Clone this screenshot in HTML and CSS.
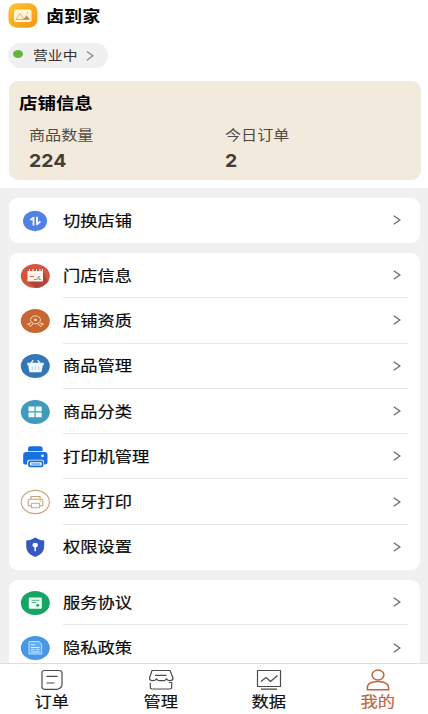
FILE: index.html
```html
<!DOCTYPE html>
<html lang="zh-CN">
<head>
<meta charset="utf-8">
<title>卤到家</title>
<link rel="stylesheet" href="styles.css">
</head>
<body>
<div class="app">
  <header class="header">
    <div class="brand">
      <svg class="logo" viewBox="0 0 30 25">
        <defs><linearGradient id="gold" x1="0" y1="0" x2="1" y2="1"><stop offset="0" stop-color="#fcc72c"/><stop offset="1" stop-color="#f29418"/></linearGradient></defs>
        <rect x=".5" y=".3" width="29" height="24.4" rx="8.5" ry="8" fill="url(#gold)"/>
        <rect x="6" y="6.5" width="17.5" height="12.5" rx="2" fill="#fff4d6"/>
        <path d="M8 16.5l4-6 4 6z" fill="none" stroke="#dfa95c" stroke-width=".9"/>
        <path d="M15 16.8l3.5-4.5 3.5 4.5z" fill="#c88b4c"/><circle cx="19.5" cy="9.7" r=".8" fill="#f5b32b"/>
      </svg>
      <h1 class="name"><span class="wide">卤到家</span></h1>
    </div>
    <div class="status">
      <i class="dot"></i><span class="status-text wide">营业中</span>
      <svg class="status-chevron" viewBox="0 0 8 12"><path d="M1 1.5l5.8 4.3L1 10.2"/></svg>
    </div>
    <section class="summary">
      <h2 class="summary-title"><span class="wide">店铺信息</span></h2>
      <dl class="stats">
        <div class="stat"><dt><span class="wide">商品数量</span></dt><dd><span class="wide">224</span></dd></div>
        <div class="stat"><dt><span class="wide">今日订单</span></dt><dd><span class="wide">2</span></dd></div>
      </dl>
    </section>
  </header>

  <main class="menu">
    <section class="card single">
      <div class="row">
        <svg class="icon" viewBox="0 0 30 26"><ellipse cx="15" cy="13" rx="12" ry="10.2" fill="#4f82e4"/><path d="M10.3 12l3.2-2.4v8M17 8.700v7.600l3.400-3" fill="none" stroke="#fff" stroke-width="1.8" stroke-linejoin="round"/></svg>
        <div class="line"><span class="label">切换店铺</span><svg class="chevron" viewBox="0 0 8 10"><path d="M.8.8l6 4.200-6 4.200"/></svg></div>
      </div>
    </section>

    <section class="card">
      <div class="row">
        <svg class="icon" viewBox="0 0 30 26"><ellipse cx="15.3" cy="13" rx="14.5" ry="12" fill="#d35440"/><path d="M23 8l4.500 10c-2 4-6 6.500-11.500 7l-8-6z" fill="#b0443b"/><path d="M7.500 8h15.500v10.500h-15.500z" fill="#fff1e8"/><path d="M9.500 6v4M13 6v4M16.500 6v4M20 6v4M22.500 6v4" stroke="#fff"/><path d="M10 13.500h4" stroke="#cf6657"/><path d="M14 16.500h3l2-3.500v3.500h2" fill="none" stroke="#5ea39a" stroke-width=".9"/></svg>
        <div class="line"><span class="label">门店信息</span><svg class="chevron" viewBox="0 0 8 10"><path d="M.8.8l6 4.200-6 4.200"/></svg></div>
      </div>
      <div class="row">
        <svg class="icon" viewBox="0 0 30 26"><ellipse cx="15.3" cy="13" rx="14.5" ry="12" fill="#c76631"/><g fill="none" stroke="#ffd5b2"><ellipse cx="15.5" cy="11.8" rx="5" ry="4"/><path d="M11.5 14.8l-4 1.3 2 .8.7 1.8 3.2-3M19.5 14.8l4 1.3-2 .8-.7 1.8-3.2-3"/></g><ellipse cx="15.5" cy="11.8" rx="1.5" ry="1.2" fill="#ffe2c7"/></svg>
        <div class="line"><span class="label">店铺资质</span><svg class="chevron" viewBox="0 0 8 10"><path d="M.8.8l6 4.200-6 4.200"/></svg></div>
      </div>
      <div class="row">
        <svg class="icon" viewBox="0 0 30 26"><ellipse cx="15.3" cy="13" rx="14.5" ry="12" fill="#3176b5"/><path d="M10.500 11l2.800-3.800M20.500 11l-2.800-3.800" stroke="#e8f4ff" stroke-width="1.4"/><path d="M7.200 9.700h16.600v2.600h-1l-1.300 6.900h-12l-1.300-6.900h-1z" fill="#eff8ff"/><path d="M12.300 13v4M15.500 13v4M18.700 13v4" stroke="#b9d6eb" stroke-width=".9"/></svg>
        <div class="line"><span class="label">商品管理</span><svg class="chevron" viewBox="0 0 8 10"><path d="M.8.8l6 4.200-6 4.200"/></svg></div>
      </div>
      <div class="row">
        <svg class="icon" viewBox="0 0 30 26"><ellipse cx="15.3" cy="13" rx="14.5" ry="12" fill="#3e9bbd"/><path d="M8.5 7.5h6v4.8h-6zM15.700 7.500h6v4.800h-6zM8.500 13.500h6v4.800h-6zM15.700 13.500h6v4.800h-6z" fill="#f1fbff"/></svg>
        <div class="line"><span class="label">商品分类</span><svg class="chevron" viewBox="0 0 8 10"><path d="M.8.8l6 4.200-6 4.200"/></svg></div>
      </div>
      <div class="row">
        <svg class="icon" viewBox="0 0 30 26"><path d="M8 7.200V4.400q0-2.200 2.500-2.200h9.600q2.500 0 2.500 2.200v2.800z" fill="#1770e0"/><path d="M6.500 8h18q3 0 3 2.800v7.600q0 2.100-2.500 2.100h-.9v-2.700q0-2-2.400-2H9.500q-2.400 0-2.400 2v2.700H6q-2.800 0-2.800-2.100v-7.600q0-2.800 3.300-2.800z" fill="#1770e0"/><rect x="9" y="17.400" width="13.600" height="5" rx="1.300" fill="#fff" stroke="#1770e0" stroke-width="1.800"/><path d="M11.500 20h8.800" stroke="#1770e0"/><circle cx="22.500" cy="11.800" r="1.400" fill="#fff"/></svg>
        <div class="line"><span class="label">打印机管理</span><svg class="chevron" viewBox="0 0 8 10"><path d="M.8.8l6 4.200-6 4.200"/></svg></div>
      </div>
      <div class="row">
        <svg class="icon" viewBox="0 0 30 26"><g fill="none" stroke="#c8a37c" stroke-width="1.1"><ellipse cx="15.3" cy="13" rx="14.1" ry="11.6"/><path d="M11 10V7.500h9V10M11 16.800H8.200v-5q0-1.600 2-1.600h10.600q2 0 2 1.600v5H20"/><rect x="11.300" y="14.300" width="8.400" height="4.400" rx="1"/><path d="M19.500 12.200h1.500"/></g></svg>
        <div class="line"><span class="label">蓝牙打印</span><svg class="chevron" viewBox="0 0 8 10"><path d="M.8.8l6 4.200-6 4.200"/></svg></div>
      </div>
      <div class="row">
        <svg class="icon" viewBox="0 0 30 26"><path d="M15.200 3.500q4 2.800 9 3v6q0 7-9 10.500-9-3.500-9-10.500v-6q5-.2 9-3z" fill="#3558c2"/><ellipse cx="15.200" cy="11" rx="2.700" ry="2.300" fill="#fff"/><path d="M15.200 12v5.200" stroke="#fff" stroke-width="1.500"/></svg>
        <div class="line"><span class="label">权限设置</span><svg class="chevron" viewBox="0 0 8 10"><path d="M.8.8l6 4.200-6 4.200"/></svg></div>
      </div>
    </section>

    <section class="card">
      <div class="row">
        <svg class="icon" viewBox="0 0 30 26"><ellipse cx="15.300" cy="13" rx="14.500" ry="12" fill="#15a565"/><rect x="8.800" y="7.500" width="13" height="11.300" rx="1" fill="#effff6"/><path d="M11.500 10.300h8M11.500 12.500h4.500" stroke="#48b985"/><circle cx="17.700" cy="15.200" r="1.500" fill="#28a66c"/></svg>
        <div class="line"><span class="label">服务协议</span><svg class="chevron" viewBox="0 0 8 10"><path d="M.8.8l6 4.200-6 4.200"/></svg></div>
      </div>
      <div class="row">
        <svg class="icon" viewBox="0 0 30 26"><ellipse cx="15.300" cy="13" rx="14.500" ry="12" fill="#4896e6"/><path d="M9 6.500h10l2.700 2.500v10H9z" fill="#66aef0" stroke="#b9dfff"/><path d="M11 9.700h4M11 12.500h8.500M11 14.700h3.500M16 14.700h3.500M11 17h8.500" stroke="#d3eaff"/></svg>
        <div class="line"><span class="label">隐私政策</span><svg class="chevron" viewBox="0 0 8 10"><path d="M.8.8l6 4.200-6 4.200"/></svg></div>
      </div>
    </section>
  </main>

  <nav class="tabs">
    <a class="tab"><svg viewBox="0 0 28 24"><path d="M6.500 2.500h14.500q3 0 3 2.500v11.500q0 2-1.500 3.300t-3.500 1.500H6.500q-2.500 0-2.500-2.500V4.800q0-2.300 2.500-2.300zM8.500 8.300h11M8.500 15h8"/></svg><span>订单</span></a>
    <a class="tab"><svg viewBox="0 0 28 24"><path d="M5 2.500h18l3 7.500q0 2.700-3 2.700-2.500 0-3.500-2-1 2-3 2h-4q-2 0-3-2-1 2-3.500 2-3.500 0-3.500-2.700zM8 7.300h11.500M3.300 15v4.300q0 1.700 1.800 1.700h17.800q1.800 0 1.800-1.700v-4.800h-3"/></svg><span>管理</span></a>
    <a class="tab"><svg viewBox="0 0 28 24"><path d="M2.500 2.500h23v16h-23zM6 13.500l5-4 4.500 4 7-6M6 21.200h16"/></svg><span>数据</span></a>
    <a class="tab active"><svg viewBox="0 0 28 24"><ellipse cx="14" cy="7" rx="5.900" ry="5"/><path d="M3.300 21.800v-1.500q0-6.800 10.700-6.800t10.700 6.800v1.500z"/></svg><span>我的</span></a>
  </nav>
</div>
</body>
</html>
```
FILE: styles.css
```css
* { box-sizing: border-box; }
body {
  margin: 0;
  background: #fff;
  color: #111;
  font-family: "Noto Sans CJK SC", sans-serif;
}
h1, h2, dl, dd { margin: 0; }
svg { display: block; flex: none; }

.app {
  display: flex;
  flex-direction: column;
  height: 714px;
  overflow: hidden;
}
.wide {
  display: inline-block;
  transform-origin: left center;
  white-space: nowrap;
}

.header {
  flex: none;
  height: 188px;
  padding: 3px 7px 0 8px;
}
.brand {
  display: flex;
  align-items: center;
  gap: 8px;
  height: 25px;
}
.logo { width: 30px; height: 25px; }
.name {
  margin-bottom: 2px;
  font-size: 16px;
  line-height: 24px;
  font-weight: 700;
  color: #000;
}
.name .wide { transform: scaleX(1.13); }

.status {
  display: flex;
  align-items: center;
  width: 100px;
  height: 25px;
  margin-top: 15px;
  padding-left: 5px;
  border-radius: 13px;
  background: #f0f0f1;
}
.dot {
  width: 10px;
  height: 8px;
  margin-bottom: 3px;
  border-radius: 50%;
  background: #65b63e;
}
.status-text {
  width: 52px;
  margin: 0 0 2px 10px;
  font-size: 13px;
  line-height: 20px;
  color: #333;
  transform: scaleX(1.14);
}
.status-chevron { width: 8px; height: 12px; margin-left: 1px; }
.status-chevron path { fill: none; stroke: #888; stroke-width: 1.3; }

.summary {
  height: 99px;
  margin: 13px 0 0 1px;
  padding: 10px 10px 0;
  border-radius: 9px;
  background: #f3eade;
}
.summary-title {
  font-size: 15.5px;
  line-height: 23px;
  color: #000;
}
.summary-title .wide { transform: scaleX(1.19); }
.stats {
  display: grid;
  grid-template-columns: 196px 1fr;
  padding: 9px 0 0 10px;
}
.stat dt {
  font-size: 14px;
  line-height: 22px;
  color: #514a41;
}
.stat dt .wide { transform: scaleX(1.15); }
.stat dd {
  margin-top: 2px;
  font-family: Inter, sans-serif;
  font-size: 18px;
  font-weight: 700;
  line-height: 28px;
  color: #453d33;
}
.stat dd .wide { transform: scaleX(1.08); }

.menu {
  display: flex;
  flex-direction: column;
  flex: 1;
  gap: 10px;
  min-height: 0;
  padding: 10px 8px 0 9px;
  overflow: hidden;
  background: #f0f0f0;
}
.card {
  flex: none;
  border-radius: 9px;
  background: #fff;
}
.row {
  display: flex;
  align-items: center;
  height: 45.3px;
  padding: 0 12px 0 11px;
}
.single .row { height: 45px; }
.icon {
  width: 30px;
  height: 26px;
  margin-right: 13px;
}
.line {
  display: flex;
  flex: 1;
  align-items: center;
  justify-content: space-between;
  height: 100%;
  padding-right: 7px;
  border-bottom: 1px solid #e9e9e9;
}
.row:last-child .line { border-bottom-color: transparent; }
.label {
  margin-bottom: 1px;
  font-size: 14.8px;
  line-height: 22px;
  color: #080808;
  -webkit-text-stroke: .2px currentColor;
  transform: scaleX(1.165);
  transform-origin: left center;
  white-space: nowrap;
}
.chevron { width: 8px; height: 10px; }
.chevron path { fill: none; stroke: #707070; stroke-width: 1.4; }

.tabs {
  display: grid;
  grid-template-columns: repeat(4, 108.5px);
  flex: none;
  height: 51px;
  margin-left: -2px;
  padding-top: 4px;
  border-top: 1px solid #dedede;
  background: #fff;
}
.tab {
  display: flex;
  flex-direction: column;
  align-items: center;
}
.tab svg {
  width: 28px;
  height: 24px;
  fill: none;
  stroke: #4b4b4b;
  stroke-width: 1.2;
  stroke-linejoin: round;
}
.tab span {
  margin-top: -1px;
  font-size: 14.8px;
  line-height: 20px;
  -webkit-text-stroke: .2px currentColor;
  transform: scaleX(1.165);
}
.tab.active { color: #bd6540; }
.tab.active svg { stroke: #bd6540; stroke-width: 1.5; }
```
